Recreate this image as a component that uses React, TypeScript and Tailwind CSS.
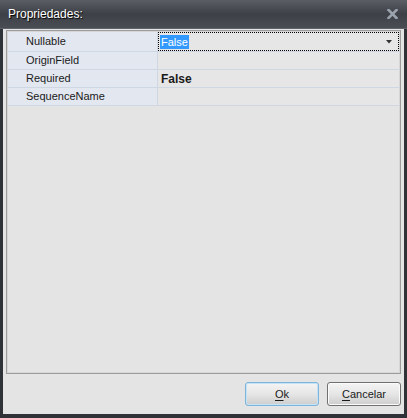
import { useState } from 'react';

const rows = [
  { name: 'Nullable', value: 'False', kind: 'select' },
  { name: 'OriginField', value: '', kind: 'text' },
  { name: 'Required', value: 'False', kind: 'bold' },
  { name: 'SequenceName', value: '', kind: 'text' },
];

function CloseIcon() {
  return (
    <svg width="11" height="10" viewBox="0 0 11 10">
      <path d="M1.5 1 L9.5 9 M9.5 1 L1.5 9" stroke="#9aa3ad" strokeWidth="2.6" strokeLinecap="square" />
    </svg>
  );
}

function DialogButton({ label, accel, primary }: { label: string; accel: string; primary?: boolean }) {
  return (
    <button
      className={`w-[74px] h-[24px] rounded-[3px] border text-[11px] text-[#1a1a1a] bg-gradient-to-b from-[#f4f4f4] via-[#e6e6e6] to-[#cdcdcd] ${
        primary ? 'border-[#7eb4da] shadow-[inset_0_0_0_1px_#c4e3f7]' : 'border-[#707070] shadow-[inset_0_0_0_1px_#fbfbfb]'
      }`}
    >
      <span className="underline underline-offset-[2px]">{accel}</span>
      {label}
    </button>
  );
}

export default function App() {
  const [selected] = useState('Nullable');

  return (
    <div
      className="w-[407px] h-[418px] bg-[#2f3236] flex flex-col"
      style={{ fontFamily: '"Liberation Sans", Arial, sans-serif' }}
    >
      {/* Title bar */}
      <div className="h-[29px] shrink-0 flex items-center justify-between pl-[8px] pr-[9px] bg-gradient-to-b from-[#5b5e64] via-[#3d4046] to-[#4a4d53] border-b border-[#5f6268]">
        <span className="text-[12px] text-white [text-shadow:1px_1px_1px_#000]">Propriedades:</span>
        <CloseIcon />
      </div>

      {/* Client area */}
      <div className="flex-1 mx-[3px] mb-[4px] bg-[#e4e4e4] flex flex-col px-[3px] pt-[1px]">
        {/* Property grid */}
        <div className="h-[344px] border border-[#9c9c9c] bg-[#e4e4e4]">
          <div className="h-full border border-[#d6d6d6]">
            {rows.map((row, i) => (
              <div
                key={row.name}
                className={`flex border-b border-[#cfd7e3] ${i === 0 ? 'h-[20px]' : 'h-[18px]'}`}
              >
                <div className="w-[150px] shrink-0 bg-[#e3e7f0] border-r border-[#cfd7e3] pl-[18px] flex items-center text-[11px] text-[#1a1a1a]">
                  {row.name}
                </div>
                <div className="flex-1 bg-[#e6e6e6] flex items-center text-[11px] text-[#1a1a1a]">
                  {row.kind === 'select' && selected === row.name ? (
                    <div className="w-full h-full border border-dotted border-black flex items-center justify-between pl-[1px] pr-[6px]">
                      <span className="bg-[#3399ff] text-white px-[1px] leading-[14px]">{row.value}</span>
                      <svg width="6" height="4" viewBox="0 0 6 4">
                        <path d="M0 0 H6 L3 3.5 Z" fill="#333" />
                      </svg>
                    </div>
                  ) : (
                    <span className={`pl-[3px] ${row.kind === 'bold' ? 'font-bold text-[12px]' : ''}`}>{row.value}</span>
                  )}
                </div>
              </div>
            ))}
          </div>
        </div>

        {/* Buttons */}
        <div className="flex justify-end gap-[8px] mt-[8px]">
          <DialogButton label="k" accel="O" primary />
          <DialogButton label="ancelar" accel="C" />
        </div>
      </div>
    </div>
  );
}
